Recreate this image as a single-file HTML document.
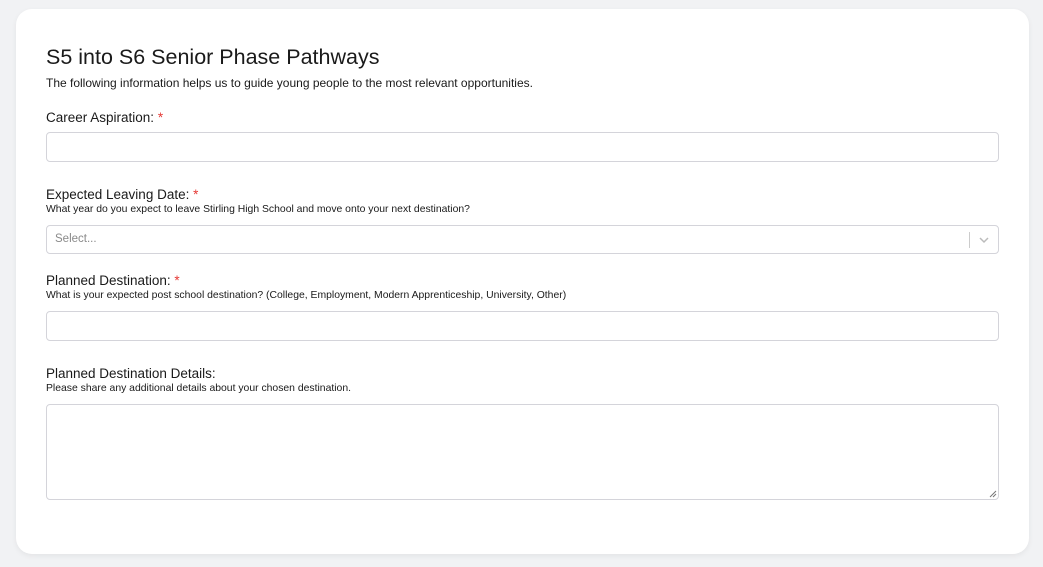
<!DOCTYPE html>
<html><head><meta charset="utf-8"><style>
*{box-sizing:border-box;margin:0;padding:0}
body{width:1043px;height:567px;background:#f1f2f4;font-family:"Liberation Sans",sans-serif;color:#1a1a1a;position:relative;overflow:hidden}
.card{position:absolute;left:16px;top:9px;width:1013px;height:545px;background:#fff;border-radius:16px;box-shadow:0 2px 6px rgba(0,0,0,.06)}
.t{position:absolute;left:46px;white-space:nowrap}
h1{font-weight:400;font-size:21.5px;top:45px}
.sub{font-size:12px;top:76px}
.lab{font-size:13.5px}
.lab span{color:#e53935}
.help{font-size:10.4px}
.box{position:absolute;left:46px;width:953px;border:1px solid #d4d4da;border-radius:4px;background:#fff}
.sel{color:#8a8a8a;font-size:11.5px;padding:7px 0 0 8px}
.sep{position:absolute;right:28px;top:6px;width:1px;height:16px;background:#ccc}
</style></head><body>
<div class="card"></div>
<h1 class="t">S5 into S6 Senior Phase Pathways</h1>
<div class="t sub">The following information helps us to guide young people to the most relevant opportunities.</div>
<div class="t lab" style="top:110px">Career Aspiration: <span>*</span></div>
<div class="box" style="top:132px;height:30px"></div>
<div class="t lab" style="top:187px">Expected Leaving Date: <span>*</span></div>
<div class="t help" style="top:204px">What year do you expect to leave Stirling High School and move onto your next destination?</div>
<div class="box sel" style="top:225px;height:29px">Select...<div class="sep"></div>
<svg style="position:absolute;right:8px;top:9px" width="12" height="10" viewBox="0 0 12 10"><path d="M2 3l4 4 4-4" fill="none" stroke="#bbb" stroke-width="1.5"/></svg></div>
<div class="t lab" style="top:273px">Planned Destination: <span>*</span></div>
<div class="t help" style="top:290px">What is your expected post school destination? (College, Employment, Modern Apprenticeship, University, Other)</div>
<div class="box" style="top:311px;height:30px"></div>
<div class="t lab" style="top:366px">Planned Destination Details:</div>
<div class="t help" style="top:383px">Please share any additional details about your chosen destination.</div>
<div class="box" style="top:404px;height:96px">
<svg style="position:absolute;right:1px;bottom:1px" width="8" height="8" viewBox="0 0 8 8"><path d="M7 1L1 7M7 4L4 7" stroke="#777" stroke-width="1"/></svg></div>
</body></html>
